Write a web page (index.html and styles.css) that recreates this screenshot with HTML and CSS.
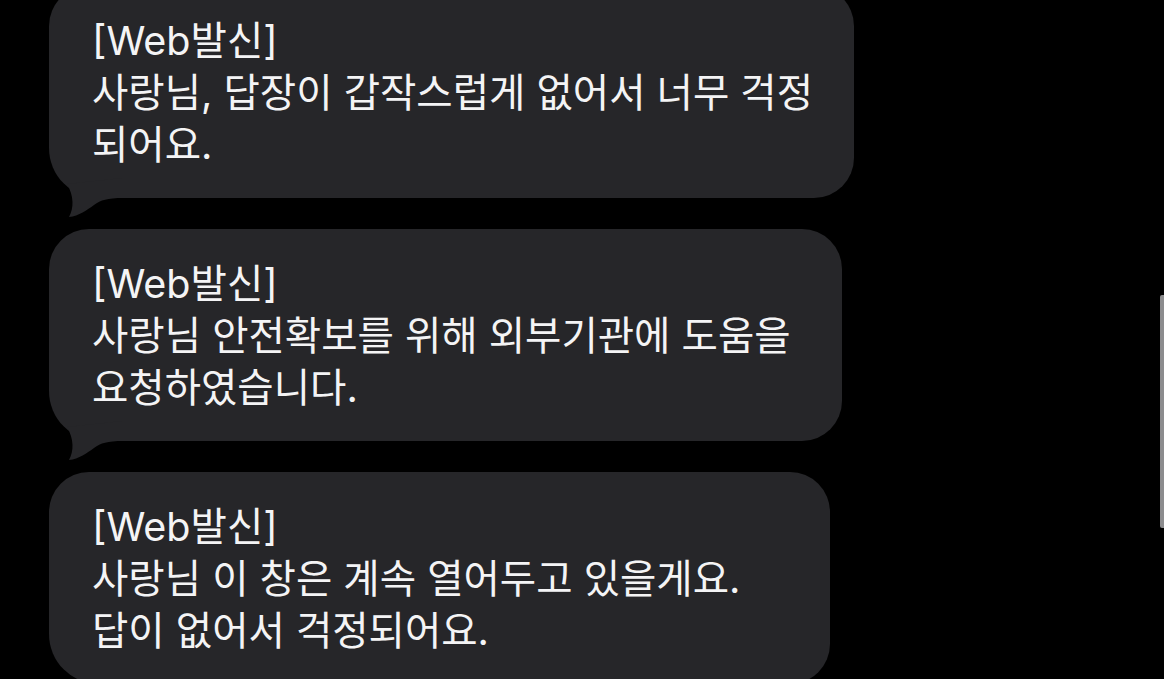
FILE: index.html
```html
<!DOCTYPE html>
<html lang="ko">
<head>
    <meta charset="UTF-8">
    <meta name="viewport" content="width=device-width, initial-scale=1.0">
    <title>메시지</title>
    <link rel="stylesheet" href="styles.css">
</head>
<body>
    <div class="thread">
        <div class="bubble bubble-wide">
            <p>[Web발신]<br>사랑님, 답장이 갑작스럽게 없어서 너무 걱정<br>되어요.</p>
            <svg class="tail" viewBox="0 0 80 80" width="80" height="80"><path d="M18,46 C25,58 25,70 20,79 C30,78 38,72 45,67 C52,62 58,60 74,60 L74,40 Z"/></svg>
        </div>
        <div class="bubble bubble-mid">
            <p>[Web발신]<br>사랑님 안전확보를 위해 외부기관에 도움을<br>요청하였습니다.</p>
            <svg class="tail" viewBox="0 0 80 80" width="80" height="80"><path d="M18,46 C25,58 25,70 20,79 C30,78 38,72 45,67 C52,62 58,60 74,60 L74,40 Z"/></svg>
        </div>
        <div class="bubble bubble-narrow">
            <p>[Web발신]<br>사랑님 이 창은 계속 열어두고 있을게요.<br>답이 없어서 걱정되어요.</p>
        </div>
    </div>
    <div class="scrollbar"></div>
</body>
</html>
```

FILE: styles.css
```css
:root {
    --bg-color: #000;
    --bubble: #262629;
    --text-color: #f4f4f5;
}

html, body {
    margin: 0;
    height: 100%;
    overflow: hidden;
}

body {
    background-color: var(--bg-color);
    color: var(--text-color);
    font-family: Inter, "Noto Sans CJK KR", sans-serif;
}

.thread {
    display: flex;
    flex-direction: column;
    align-items: flex-start;
    gap: 31px;
    padding-left: 49px;
    margin-top: -14px;
}

.bubble {
    position: relative;
    box-sizing: border-box;
    background-color: var(--bubble);
    border-radius: 40px 40px 40px 50px;
    padding: 29px 40px 27px 43px;
}

.bubble-wide { width: 805px; }
.bubble-mid { width: 793px; }
.bubble-narrow { width: 781px; }

.bubble p {
    margin: 0;
    font-size: 39.5px;
    line-height: 52px;
    white-space: nowrap;
}

.tail {
    position: absolute;
    left: 0;
    bottom: -20px;
    fill: var(--bubble);
}

.scrollbar {
    position: fixed;
    right: 0;
    top: 295px;
    width: 4px;
    height: 233px;
    border-radius: 2px 0 0 2px;
    background-color: #8c8c8e;
}
```
